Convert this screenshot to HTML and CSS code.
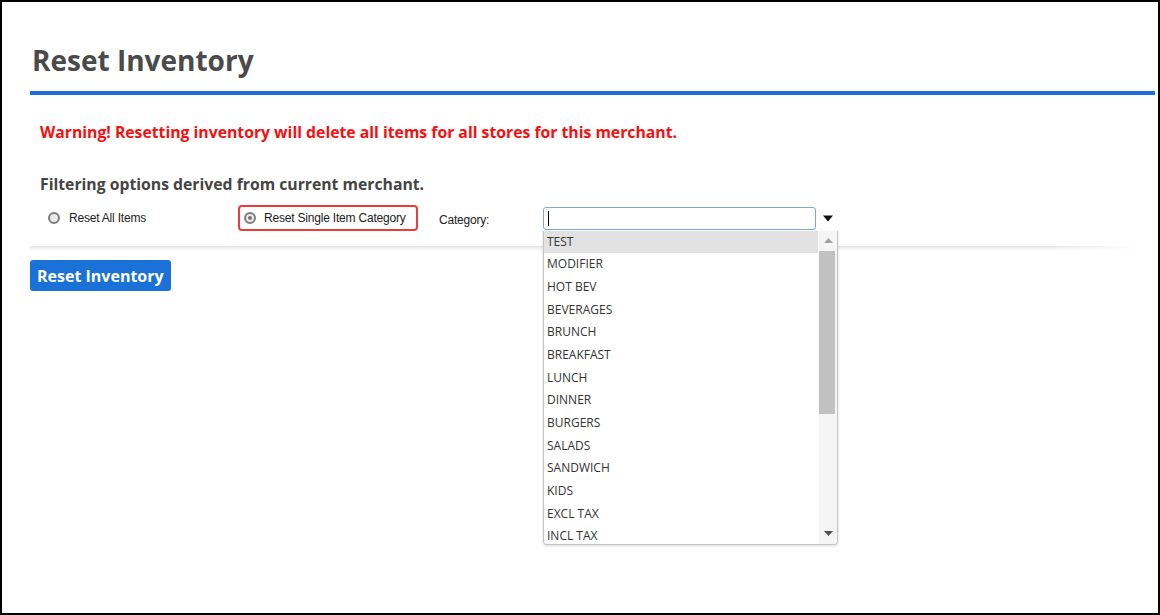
FILE: index.html
```html
<!DOCTYPE html>
<html>
<head>
<meta charset="utf-8">
<title>Reset Inventory</title>
<link rel="stylesheet" href="styles.css">
</head>
<body>
<div class="frame">
  <h1 class="title">Reset Inventory</h1>
  <div class="rule"></div>
  <div class="content">
    <p class="warning">Warning! Resetting inventory will delete all items for all stores for this merchant.</p>
    <p class="subhead">Filtering options derived from current merchant.</p>
    <div class="options">
      <label class="opt opt-all"><span class="radio"></span><span class="opt-text">Reset All Items</span></label>
      <label class="opt opt-single"><span class="radio checked"></span><span class="opt-text">Reset Single Item Category</span></label>
      <span class="cat-label">Category:</span>
      <div class="combo">
        <div class="input"><span class="caret"></span></div>
        <svg class="arrow" width="10" height="7" viewBox="0 0 10 7"><path d="M0 0.5 L10 0.5 L5 6.5 Z" fill="#111"/></svg>
        <div class="list">
          <div class="items">
            <div class="item hl">TEST</div>
            <div class="item">MODIFIER</div>
            <div class="item">HOT BEV</div>
            <div class="item">BEVERAGES</div>
            <div class="item">BRUNCH</div>
            <div class="item">BREAKFAST</div>
            <div class="item">LUNCH</div>
            <div class="item">DINNER</div>
            <div class="item">BURGERS</div>
            <div class="item">SALADS</div>
            <div class="item">SANDWICH</div>
            <div class="item">KIDS</div>
            <div class="item">EXCL TAX</div>
            <div class="item">INCL TAX</div>
          </div>
          <div class="scrollbar">
            <div class="sb-btn"><svg width="9" height="5" viewBox="0 0 9 5"><path d="M0 5 L9 5 L4.5 0 Z" fill="#a3a3a3"/></svg></div>
            <div class="sb-thumb"></div>
            <div class="sb-track"></div>
            <div class="sb-btn"><svg width="9" height="5" viewBox="0 0 9 5"><path d="M0 0 L9 0 L4.5 5 Z" fill="#505050"/></svg></div>
          </div>
        </div>
      </div>
    </div>
  </div>
  <div class="separator"></div>
  <button class="btn">Reset Inventory</button>
</div>
</body>
</html>
```

FILE: styles.css
```css
html, body {
  margin: 0;
  padding: 0;
  background: #fff;
}
.frame {
  box-sizing: border-box;
  width: 1160px;
  height: 615px;
  border: 2px solid #000;
  padding: 0 3px 0 28px;
  font-family: "Open Sans", "Liberation Sans", sans-serif;
  overflow: hidden;
}
.title {
  margin: 38px 0 0 0;
  padding-left: 2px;
  font-size: 28px;
  line-height: 40px;
  font-weight: 700;
  color: #4a4a4a;
}
.rule {
  margin-top: 11px;
  height: 4px;
  background: #1a70d8;
}
.content {
  padding-left: 10px;
}
.warning {
  margin: 26px 0 0 0;
  font-size: 15.75px;
  line-height: 22px;
  font-weight: 700;
  color: #f50f0f;
}
.subhead {
  margin: 30px 0 0 0;
  font-size: 15.75px;
  line-height: 22px;
  font-weight: 700;
  color: #444;
}
.options {
  margin-top: 10px;
  height: 26px;
  display: flex;
  align-items: center;
  font-family: "Liberation Sans", Arial, sans-serif;
  font-size: 12px;
  letter-spacing: -0.2px;
  color: #222;
}
.opt {
  display: flex;
  align-items: center;
  box-sizing: border-box;
  height: 26px;
}
.opt-all {
  width: 198px;
  padding-left: 8px;
}
.opt-single {
  width: 180px;
  border: 2px solid #ec3a40;
  border-radius: 4px;
  padding-left: 4px;
}
.radio {
  box-sizing: border-box;
  width: 12px;
  height: 12px;
  border-radius: 50%;
  border: 2px solid #7d7d7d;
  background: #e9e9e9;
  margin-right: 9px;
  flex: none;
  position: relative;
}
.radio.checked {
  margin-right: 8px;
}
.radio.checked::after {
  content: "";
  position: absolute;
  left: 2px;
  top: 2px;
  width: 4px;
  height: 4px;
  border-radius: 50%;
  background: #777;
}
.cat-label {
  margin-left: 21px;
  width: 104px;
  padding-top: 4px;
}
.combo {
  position: relative;
  display: flex;
  align-items: center;
  letter-spacing: normal;
}
.input {
  box-sizing: border-box;
  width: 273px;
  height: 23px;
  border: 1px solid #7fa8d8;
  border-radius: 3px;
  background: #fff;
  display: flex;
  align-items: center;
  padding-left: 4px;
}
.caret {
  width: 1px;
  height: 15px;
  background: #000;
}
.arrow {
  margin-left: 7px;
  margin-top: 1px;
}
.list {
  position: absolute;
  left: 0;
  top: 24px;
  box-sizing: border-box;
  width: 295px;
  height: 314px;
  border: 1px solid #c4c4cc;
  border-top: none;
  border-radius: 0 0 4px 4px;
  box-shadow: 0 1px 3px rgba(0,0,0,0.15);
  background: #fff;
  display: flex;
  overflow: hidden;
  font-family: "Open Sans", "Liberation Sans", sans-serif;
  font-size: 12px;
  color: #333;
  z-index: 5;
}
.items {
  flex: 1;
  overflow: hidden;
}
.item {
  height: 22.7px;
  line-height: 22.7px;
  padding-left: 3px;
  white-space: nowrap;
}
.item.hl {
  background: #e2e2e2;
}
.scrollbar {
  width: 18px;
  display: flex;
  flex-direction: column;
  background: #f5f5f5;
  border-left: 1px solid #fafafa;
}
.sb-btn {
  height: 20px;
  display: flex;
  align-items: center;
  justify-content: center;
  flex: none;
}
.sb-thumb {
  height: 163px;
  margin: 0 2px 0 0;
  background: #c1c1c1;
  flex: none;
}
.sb-track {
  flex: 1;
}
.separator {
  margin-top: 15px;
  height: 5px;
  margin-right: 15px;
  background: linear-gradient(to bottom, #e2e2e2, #f6f6f6 60%, #fff);
  -webkit-mask-image: linear-gradient(to right, #000 0%, #000 92%, transparent 100%);
  mask-image: linear-gradient(to right, #000 0%, #000 92%, transparent 100%);
}
.btn {
  margin-top: 9px;
  height: 31px;
  padding: 0 7px;
  border: none;
  border-radius: 3px;
  background: #1a72d8;
  color: #fff;
  font-family: "Open Sans", "Liberation Sans", sans-serif;
  font-size: 16px;
  font-weight: 700;
  display: block;
}
```
